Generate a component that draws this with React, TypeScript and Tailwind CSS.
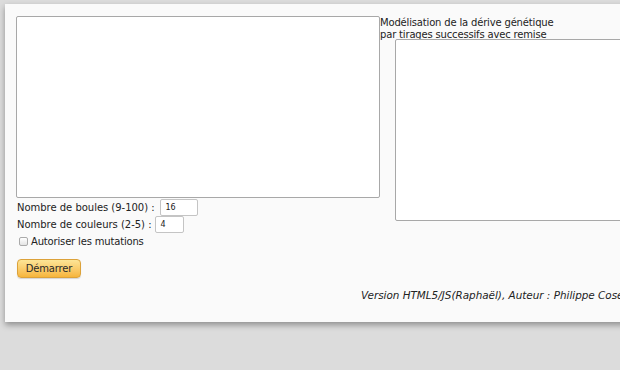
import React from "react";

export default function App() {
  return (
    <div className="w-[620px] h-[370px] overflow-hidden bg-[#dcdcdc] pt-[4px] pl-[5px]" style={{ fontFamily: '"DejaVu Sans", Verdana, sans-serif' }}>
      <div className="w-[660px] h-[318px] bg-[#fafafa] shadow-[0_3px_6px_rgba(0,0,0,0.35)] pl-[11px] pt-[12px] text-[10px] tracking-[-0.17px] text-[#222]">
        <div className="flex">
          <div className="w-[364px] flex flex-col">
            <div className="w-[364px] h-[182px] bg-white border border-[#a8a8a8] rounded-[2px]" />
            <div className="flex items-center h-[17px] mt-[1px] pl-[1px]">
              <span className="tracking-[-0.02px]">Nombre de boules (9-100) :</span>
              <div className="ml-[5px] w-[38px] h-[17px] bg-white border border-[#c4c4c4] rounded-[2px] text-[8px] leading-[15px] pl-[5px]">16</div>
            </div>
            <div className="flex items-center h-[17px] pl-[1px]">
              <span className="tracking-[-0.02px]">Nombre de couleurs (2-5) :</span>
              <div className="ml-[4px] w-[29px] h-[17px] bg-white border border-[#c4c4c4] rounded-[2px] text-[8px] leading-[15px] pl-[4px]">4</div>
            </div>
            <div className="flex items-center h-[16px] pl-[3px]">
              <div className="w-[9px] h-[9px] border border-[#aaa] rounded-[2px] bg-gradient-to-b from-white to-[#e4e4e4]" />
              <span className="ml-[3px]">Autoriser les mutations</span>
            </div>
            <div className="pl-[1px] mt-[10px]">
              <div className="w-[64px] h-[19px] rounded-[4px] border border-[#dca23a] bg-gradient-to-b from-[#fde596] to-[#f6b53a] text-[10px] text-[#2a2a2a] flex items-center justify-center shadow-[0_1px_1px_rgba(0,0,0,0.15)]">Démarrer</div>
            </div>
          </div>
          <div className="flex flex-col">
            <div className="leading-[12px] pt-[1px]">
              <div>Modélisation de la dérive génétique</div>
              <div>par tirages successifs avec remise</div>
            </div>
            <div className="ml-[15px] mt-[-2px] w-[260px] h-[182px] bg-white border border-[#a8a8a8] rounded-[2px]" />
          </div>
        </div>
        <div className="pl-[345px] mt-[10px] italic whitespace-nowrap text-[10.4px] tracking-normal">Version HTML5/JS(Raphaël), Auteur : Philippe Cosentino</div>
      </div>
    </div>
  );
}
